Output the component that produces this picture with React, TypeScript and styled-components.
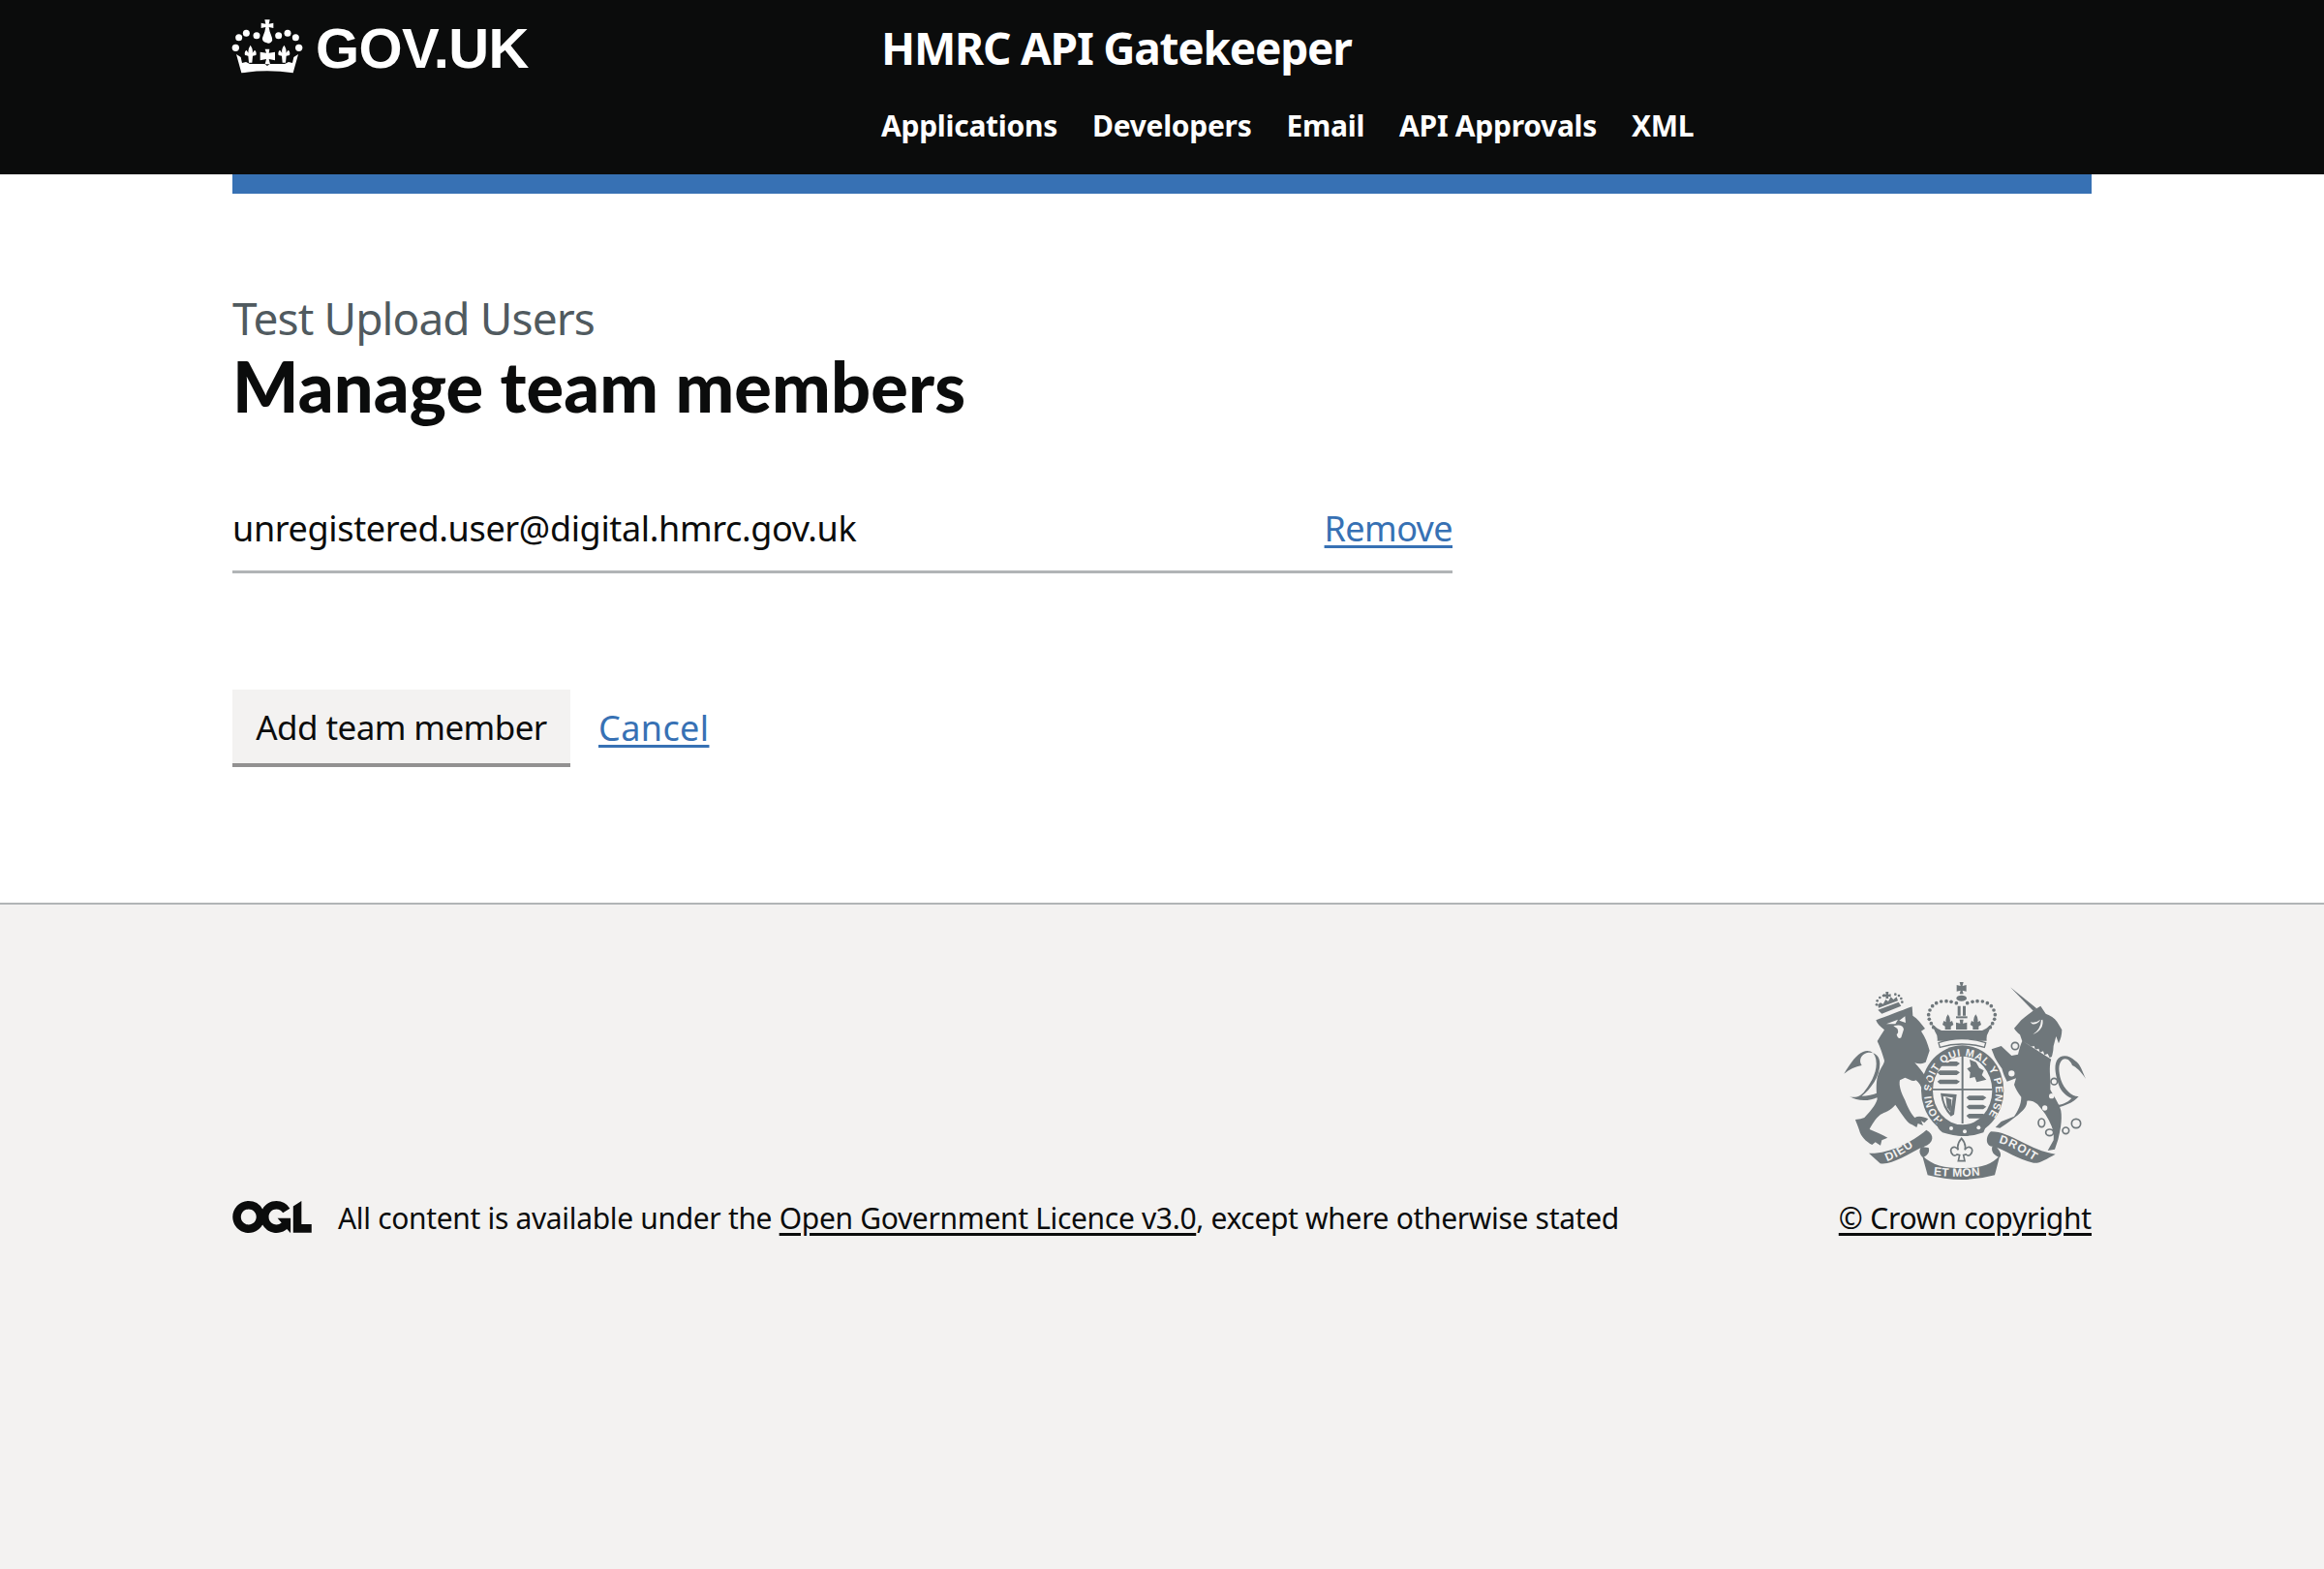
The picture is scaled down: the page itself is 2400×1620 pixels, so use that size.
import React from "react";
import styled, { createGlobalStyle } from "styled-components";

const Global = createGlobalStyle`
  html, body { margin: 0; padding: 0; background: #f3f2f1; }
  body { font-family: "Noto Sans", "Open Sans", Arial, sans-serif; color: #0b0c0c; }
  #root { min-height: 1620px; display: flex; flex-direction: column; }
`;

const Container = styled.div`
  width: 1920px;
  margin: 0 auto;
`;
const Header = styled.header`
  background: #0b0c0c;
  height: 180px;
  flex: none;
`;
const HeaderInner = styled(Container)`
  display: flex;
`;
const LogoCol = styled.a`
  width: 670px;
  flex: none;
  display: flex;
  align-items: flex-start;
  padding-top: 16px;
  gap: 6px;
  color: #fff;
  text-decoration: none;
`;
const CrownSvg = styled.svg`
  flex: none;
  margin-left: -4px;
`;
const LogoText = styled.span`
  font-family: "Liberation Sans", Arial, sans-serif;
  font-weight: 700;
  font-size: 58px;
  line-height: 68px;
  letter-spacing: -0.6px;
`;
const ServiceCol = styled.div`
  display: flex;
  flex-direction: column;
  color: #fff;
  padding-top: 20px;
`;
const ServiceName = styled.a`
  font-weight: 700;
  font-size: 46px;
  line-height: 58px;
  letter-spacing: -1.25px;
`;
const Nav = styled.nav`
  display: flex;
  gap: 36px;
  margin-top: 32px;
`;
const NavLink = styled.a`
  font-weight: 700;
  font-size: 30px;
  line-height: 40px;
  letter-spacing: -0.28px;
`;
const Main = styled.main`
  background: #fff;
  flex: none;
  height: 752px;
`;
const BlueBar = styled(Container)`
  height: 20px;
  background: #3771b4;
`;
const Caption = styled.span`
  display: block;
  margin-top: 100px;
  font-size: 46px;
  line-height: 56px;
  color: #505a5f;
  letter-spacing: -0.9px;
`;
const Title = styled.h1`
  margin: 0;
  font-family: Lato, "Noto Sans", sans-serif;
  font-weight: 900;
  font-size: 72px;
  line-height: 84px;
  letter-spacing: 0.15px;
`;
const MemberRow = styled.div`
  width: 1260px;
  margin-top: 82px;
  display: flex;
  justify-content: space-between;
  align-items: baseline;
  height: 67px;
  border-bottom: 3px solid #b1b4b6;
  font-size: 36px;
  line-height: 48px;
`;
const Email = styled.span`
  letter-spacing: -0.35px;
`;
const TextLink = styled.a`
  color: #3771b4;
  text-decoration: underline;
  text-decoration-thickness: 3px;
  text-underline-offset: 4px;
  font-size: 36px;
  letter-spacing: -0.6px;
`;
const Actions = styled.div`
  margin-top: 120px;
  display: flex;
  align-items: flex-start;
  gap: 29px;
`;
const Button = styled.button`
  border: 0;
  background: #f3f2f1;
  box-shadow: inset 0 -4px 0 #929191;
  height: 80px;
  width: 349px;
  padding: 0 0 4px;
  margin: 0;
  font-family: inherit;
  font-size: 35px;
  color: #0b0c0c;
  letter-spacing: -0.6px;
`;
const CancelLink = styled(TextLink)`
  line-height: 80px;
  letter-spacing: 0.4px;
`;
const Footer = styled.footer`
  flex: 1;
  background: #f3f2f1;
  border-top: 2px solid #b1b4b6;
`;
const FooterInner = styled(Container)`
  display: flex;
  justify-content: space-between;
  align-items: flex-end;
  padding-top: 76px;
`;
const Licence = styled.div`
  display: flex;
  align-items: center;
  gap: 27px;
`;
const OglSvg = styled.svg`
  flex: none;
  margin-top: -3px;
`;
const LicenceText = styled.span`
  font-size: 30px;
  line-height: 44px;
  letter-spacing: -0.33px;
`;
const FooterLink = styled.a`
  color: #0b0c0c;
  text-decoration: underline;
  text-decoration-thickness: 3px;
  text-underline-offset: 4px;
`;
const CopyrightBlock = styled.div`
  display: flex;
  flex-direction: column;
  align-items: flex-end;
  font-size: 30px;
  line-height: 44px;
  letter-spacing: -0.2px;
`;
const ArmsSvg = styled.svg`
  display: block;
  margin-bottom: 16px;
`;

const G = "#6f777b";
const B = "#f3f2f1";

const fleur = (cx: number) =>
  `M${cx} 92Q${cx + 9} 105 ${cx + 6} 116L${cx + 13} 107Q${cx + 20} 112 ${cx + 17} 123L${cx + 7} 125L${cx + 5} 146L${cx - 5} 146L${cx - 7} 125L${cx - 17} 123Q${cx - 20} 112 ${cx - 13} 107L${cx - 6} 116Q${cx - 9} 105 ${cx} 92Z`;

const CrownLogo = () => (
  <CrownSvg width="84" height="62" viewBox="0 0 252 186" fill="#fff">
    <path d="M112 13h16l-3 13 14-3v16l-14-3 3 14q4 10 7 20a12 12 0 0 1-18 14 12 12 0 0 1-12-14q3-10 7-20l3-14-14 3V23l14 3Z" />
    {[[32, 68, 10.5], [55, 55, 10.5], [87, 62, 10.5], [155, 62, 10.5], [183, 55, 10.5], [208, 68, 10.5], [22, 100, 11], [218, 100, 11]].map(([x, y, r]) => (
      <circle key={`${x}-${y}`} cx={x} cy={y} r={r} />
    ))}
    <path d={fleur(68)} />
    <path d={fleur(172)} />
    <path d="M113 104h14l-2 12 19-3v26l-19-4 4 16h-16l4-16-19 4v-26l19 3Z" />
    <path d="M24 120l14 9 4 18 12-3 12 6 46 0 8 6 8-6 46 0 12-6 12 3 4-18 14-9-16 58q-80-12-160 0Z" />
  </CrownSvg>
);

const OglLogo = () => (
  <OglSvg width="82" height="33" viewBox="0 0 483.2 195.7" fill="#0b0c0c">
    <path d="M421.5 142.8V.1l-50.7 32.3v161.1h112.4v-50.7zm-122.3-9.6A47.12 47.12 0 0 1 221 97.8c0-26 21.1-47.1 47.1-47.1 16.7 0 31.4 8.7 39.7 21.8l42.7-27.2A97.63 97.63 0 0 0 268.1 0c-36.5 0-68.3 20.1-85.1 49.7A98 98 0 0 0 97.8 0C43.9 0 0 43.9 0 97.8s43.9 97.8 97.8 97.8c36.5 0 68.3-20.1 85.1-49.7a97.76 97.76 0 0 0 149.6 25.4l19.4 22.2h3v-87.8h-80l24.3 27.5zM97.8 145c-26 0-47.1-21.1-47.1-47.1s21.1-47.1 47.1-47.1 47.2 21 47.2 47S123.8 145 97.8 145" />
  </OglSvg>
);

const arcDots = [
  [421, 107], [405, 103], [390, 101], [374, 102], [359, 107], [347, 116], [339, 129], [335, 143], [337, 157], [343, 170], [350, 182],
];

const ArmsLogo = () => (
  <ArmsSvg width="260" height="210" viewBox="60 30 780 630" fill={G}>
    <defs>
      <path id="garter" d="M380 470A100 112 0 1 1 508 468" />
      <path id="rib-l" d="M206 597C245 583 285 555 322 525" />
      <path id="rib-m" d="M350 640Q437 650 526 637" />
      <path id="rib-r" d="M552 540C590 548 625 572 665 597" />
    </defs>

    {/* royal crown */}
    <path d="M431 42h12l-3 12 12-3v20l-12-3 3 11h-12l3-11-12 3V51l12 3Z" />
    <ellipse cx="437" cy="92" rx="16" ry="9" />
    <path d="M425 116h9v30h-9zM441 116h9v30h-9z" />
    <path d="M420 148h35v6h-35z" />
    {arcDots.map(([x, y]) => (
      <React.Fragment key={x * y}>
        <circle cx={x} cy={y} r="5.5" />
        <circle cx={876 - x} cy={y} r="5.5" />
      </React.Fragment>
    ))}
    <path d="M395 142q9 12 6 24l7-4 4 12-8 5v10h-18v-10l-8-5 4-12 7 4q-3-12 6-24ZM481 142q9 12 6 24l7-4 4 12-8 5v10h-18v-10l-8-5 4-12 7 4q-3-12 6-24ZM431 158h12l-2 12 13-3v22h-34v-22l13 3Z" />
    <path d="M345 172l18 14 12 6h126l12-6 18-14-10 24q-8 12-6 28H362q2-16-7-28Z" />
    <path d="M366 230Q437 205 512 230L508 244Q437 224 370 244Z" fill={B} stroke={G} strokeWidth="4" />

    {/* lion */}
    <path d="M172 160C200 150 250 130 284 118L286 146C300 155 312 170 324 186L312 194C325 212 332 232 338 254L326 290C312 296 304 296 292 292C315 318 340 350 348 384L330 396L318 382C312 365 305 352 296 346C285 352 275 342 262 338L246 346C242 362 250 385 262 408C270 430 282 452 292 462C305 455 320 460 334 466L322 478L312 472L318 486L302 480L298 492L284 484C270 480 255 455 232 422C218 440 198 445 186 452C170 465 158 485 152 498C170 505 190 515 208 524L190 532L186 548L170 538L160 546C140 535 125 520 120 500C115 485 110 475 108 468L124 466L136 462C152 445 170 425 176 405C172 375 172 345 180 325C188 305 198 295 198 285C192 265 186 245 176 225C182 215 192 200 198 190C185 180 176 172 172 160Z" />
    <path d="M178 398C150 412 115 412 90 396C105 402 125 398 138 378C160 350 178 315 172 282C168 258 150 250 132 258C112 266 95 290 73 326C90 312 108 304 128 300C118 288 124 268 142 262C164 256 184 268 184 295C184 335 155 375 128 395C145 395 162 392 178 385Z" />
    <path d="M204 172l36-14-8 14ZM262 148l-18 13 20 7ZM226 178q28-8 32 10l-8 26q-10 6-14-10q8-6 2-18Z" fill={B} />
    {/* lion crown */}
    <path d="M202 72h9l-1 8 8-1v9l-8-1 1 6h-9l1-6-8 1v-9l8 1Z" />
    <path d="M178 128l64-24 8 12-60 24Z" />
    <path d="M180 122l60-22-4-12-10 8-8-8-8 14-8-6-8 14-8-4-8 6Z" />
    {[[176, 100], [184, 90], [195, 84], [232, 80], [243, 84], [250, 93], [253, 104], [174, 112]].map(([x, y]) => (
      <circle key={x} cx={x} cy={y} r="4" />
    ))}

    {/* unicorn */}
    <path d="M588 58L670 124L660 132Z" />
    <path d="M662 128L682 116L698 140C712 145 725 152 733 165L748 190C748 205 744 220 738 232L730 210L722 240C722 258 716 275 712 292C708 320 714 340 712 375C722 395 738 415 745 440C750 470 742 505 736 530L726 560L704 564L722 532C724 512 720 500 716 488C706 462 690 440 672 420C660 410 650 408 640 410C640 425 632 435 622 444C608 458 590 470 574 482L556 494L542 492L560 474L600 458C612 440 622 420 622 398C612 385 604 372 600 360L606 340L578 350C570 335 566 325 562 310C552 295 545 285 540 275L530 250L560 240L592 270L612 266C616 250 620 235 625 225L618 205C610 198 604 192 600 185L622 160C635 148 650 138 662 128Z" />
    <path d="M628 226l88 56 4-10-10 4-6-12-10 4-4-12-10 4-4-12-10 4-4-12-10 2-4-4Z" fill={B} />
    <path d="M650 166q16 4 32-8-10 16-26 14ZM688 158q6 30-30 46 24-14 26-44Z" fill={B} />
    <circle cx="695" cy="432" r="8" fill={B} />
    <circle cx="716" cy="395" r="8" fill={B} />
    <g fill={B} stroke={G} strokeWidth="5">
      <circle cx="603" cy="240" r="11" />
      <circle cx="592" cy="325" r="12" />
      <circle cx="724" cy="350" r="10" />
      <ellipse cx="685" cy="478" rx="10" ry="13" />
      <ellipse cx="710" cy="508" rx="12" ry="10" />
      <circle cx="760" cy="502" r="10" />
      <circle cx="792" cy="480" r="14" />
    </g>
    <path d="M722 432C750 430 785 415 800 396C780 398 755 375 745 345C738 320 735 295 750 282C762 275 775 285 780 300C792 305 808 320 822 342C812 320 805 295 788 285C770 268 745 265 732 285C722 305 730 335 738 360C745 380 760 395 778 402C760 420 740 425 722 422Z" />

    {/* garter and shield */}
    <ellipse cx="440" cy="378" rx="128" ry="140" />
    <ellipse cx="440" cy="378" rx="92" ry="106" fill={B} />
    <g fill={G}>
      {[286, 314, 342].map((y) => (
        <path key={y} d="M362 8l8-6h52l10 6-10 8h-52Z" transform={`translate(0 ${y})`} />
      ))}
      {[392, 420, 448].map((y) => (
        <path key={y} d="M452 8l8-6h44l10 6-10 8h-44Z" transform={`translate(0 ${y})`} />
      ))}
      <path d="M462 282l20 8 10 18 14 8-6 14 14 14-30 8-6-16-16 4 2-18-10-12 12-6Z" />
      <path d="M372 386l50 4-8 62-10 6q-26-24-32-72Zm8 10q4 30 22 50l8-46Z" fillRule="evenodd" />
    </g>
    <path d="M388 398l18 8-2 40-12-16Z" />
    <path d="M437 270h6v210h-6ZM347 372h186v5H347Z" />
    <text fontFamily="Liberation Sans, Arial, sans-serif" fontSize="32" fontWeight="700" fill={B}>
      <textPath href="#garter" textLength="505" lengthAdjust="spacing">HONI SOIT QUI MAL Y PENSE</textPath>
    </text>
    <path d="M362 470Q440 500 520 470L505 508Q445 530 378 508Q355 490 362 470Z" />
    <circle cx="405" cy="495" r="6" fill={B} />
    <circle cx="447" cy="505" r="6" fill={B} />
    <circle cx="490" cy="493" r="6" fill={B} />
    <path d="M290 296L345 368" stroke={G} strokeWidth="6" />

    {/* motto scrolls */}
    <path d="M150 572C210 575 280 540 328 500C355 515 352 540 320 552L312 585C312 575 310 560 318 552C270 575 220 610 185 604Z" />
    <path d="M315 578C345 610 385 618 440 618C490 618 530 610 556 578L540 640Q440 668 332 640Z" />
    <path d="M528 505C590 505 650 565 728 575C700 590 675 606 660 602C610 590 575 565 540 552C510 555 510 520 528 505Z" />
    <path d="M312 552C305 565 305 575 318 585C330 580 340 570 335 555ZM545 552C555 565 562 572 556 585C540 580 528 570 532 552Z" />
    <g fontFamily="Liberation Sans, Arial, sans-serif" fontWeight="700" fontSize="36" fill={B}>
      <text letterSpacing="3"><textPath href="#rib-l">DIEU</textPath></text>
      <text letterSpacing="1"><textPath href="#rib-m">ET MON</textPath></text>
      <text letterSpacing="3"><textPath href="#rib-r">DROIT</textPath></text>
    </g>
    <path d="M437 526q16 18 10 36q10-14 20-6q8 10-4 22q-6 4-12-2l-8 2 4 18h-20l4-18-8-2q-6 6-12 2q-12-12-4-22q10-8 20 6q-6-18 10-36Z" fill={B} stroke={G} strokeWidth="5" />
  </ArmsSvg>
);

export default function App() {
  return (
    <>
      <Global />
      <Header>
        <HeaderInner>
          <LogoCol>
            <CrownLogo />
            <LogoText>GOV.UK</LogoText>
          </LogoCol>
          <ServiceCol>
            <ServiceName>HMRC API Gatekeeper</ServiceName>
            <Nav>
              <NavLink>Applications</NavLink>
              <NavLink>Developers</NavLink>
              <NavLink>Email</NavLink>
              <NavLink>API Approvals</NavLink>
              <NavLink>XML</NavLink>
            </Nav>
          </ServiceCol>
        </HeaderInner>
      </Header>
      <Main>
        <BlueBar />
        <Container>
          <Caption>Test Upload Users</Caption>
          <Title>Manage team members</Title>
          <MemberRow>
            <Email>unregistered.user@digital.hmrc.gov.uk</Email>
            <TextLink>Remove</TextLink>
          </MemberRow>
          <Actions>
            <Button>Add team member</Button>
            <CancelLink>Cancel</CancelLink>
          </Actions>
        </Container>
      </Main>
      <Footer>
        <FooterInner>
          <Licence>
            <OglLogo />
            <LicenceText>
              All content is available under the <FooterLink>Open Government Licence v3.0</FooterLink>, except where otherwise stated
            </LicenceText>
          </Licence>
          <CopyrightBlock>
            <ArmsLogo />
            <FooterLink>© Crown copyright</FooterLink>
          </CopyrightBlock>
        </FooterInner>
      </Footer>
    </>
  );
}
